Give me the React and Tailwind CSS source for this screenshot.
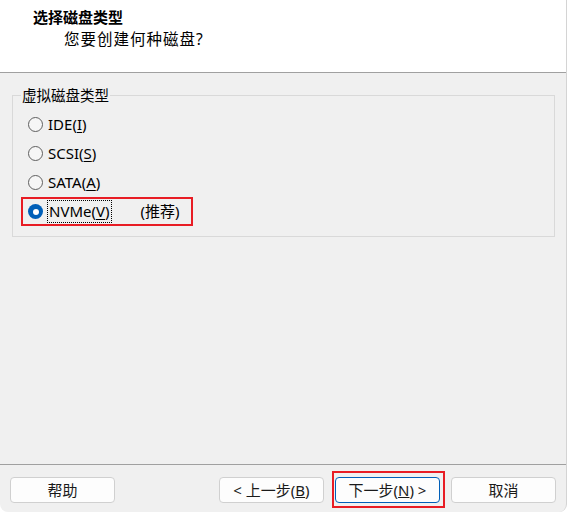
import React from "react";

const FONT = { fontFamily: '"Noto Sans", "Noto Sans CJK SC", sans-serif' };

const OPTIONS = [
  { pre: "IDE(", key: "I", post: ")" },
  { pre: "SCSI(", key: "S", post: ")" },
  { pre: "SATA(", key: "A", post: ")" },
  { pre: "NVMe(", key: "V", post: ")", selected: true, note: "(推荐)" },
];

function Radio({ checked }) {
  if (checked) {
    return (
      <span className="w-[15px] h-[15px] rounded-full bg-[#005fb8] flex items-center justify-center shrink-0">
        <span className="w-[6px] h-[6px] rounded-full bg-white" />
      </span>
    );
  }
  return (
    <span className="w-[15px] h-[15px] rounded-full border border-[#5f5f5f] bg-[#f6f6f6] shrink-0" />
  );
}

function Option({ opt }) {
  const label = (
    <span>
      {opt.pre}
      <span className="underline underline-offset-2">{opt.key}</span>
      {opt.post}
    </span>
  );
  return (
    <div
      className={
        "flex items-center h-[29px] w-[172px] pl-[5px] border-2 text-[15px] " +
        (opt.selected ? "border-[#e81c24]" : "border-transparent")
      }
    >
      <Radio checked={opt.selected} />
      {opt.selected ? (
        <span className="ml-[4px] px-[1px] leading-[21px] border border-dotted border-black">
          {label}
        </span>
      ) : (
        <span className="ml-[5px]">{label}</span>
      )}
      {opt.note && <span className="ml-[29px]">{opt.note}</span>}
    </div>
  );
}

function Button({ children, primary }) {
  return (
    <button
      className={
        "w-[105px] h-[26px] rounded-[4px] bg-[#fdfdfd] text-[15px] text-[#1a1a1a] border " +
        (primary ? "border-[#005fb8]" : "border-[#d0d0d0]")
      }
    >
      {children}
    </button>
  );
}

export default function App() {
  return (
    <div className="w-[568px] h-[512px] bg-white overflow-hidden" style={FONT}>
      <div className="w-[567px] h-[512px] bg-[#f0f0f0] rounded-b-[8px] border-r border-[#d4d4d4] flex flex-col text-[14.5px] text-black">
        <div className="h-[73px] bg-white border-b border-[#a0a0a0] pt-[6px]">
          <div className="pl-[33px] font-bold text-[15px] leading-[22px]">选择磁盘类型</div>
          <div className="pl-[64px] text-[15.5px] leading-[22px] tracking-[1px]">您要创建何种磁盘?</div>
        </div>

        <fieldset className="mt-[12px] mx-[12px] w-[543px] border border-[#d9d9d9] px-[8px] pt-[5px] pb-[10px]">
          <legend className="px-[1px] leading-[20px]">虚拟磁盘类型</legend>
          {OPTIONS.map((opt) => (
            <Option key={opt.key} opt={opt} />
          ))}
        </fieldset>

        <div className="flex-1" />

        <div className="h-[48px] border-t border-[#a0a0a0] pt-[12px] pl-[10px] flex items-start">
          <Button>帮助</Button>
          <div className="ml-auto flex gap-[11px] pr-[10px]">
            <Button>
              &lt; 上一步(<span className="underline">B</span>)
            </Button>
            <div className="relative">
              <div className="absolute -left-[3px] -top-[6px] w-[113px] h-[37px] border-2 border-[#e81c24]" />
              <Button primary>
                下一步(<span className="underline">N</span>) &gt;
              </Button>
            </div>
            <Button>取消</Button>
          </div>
        </div>
      </div>
    </div>
  );
}
